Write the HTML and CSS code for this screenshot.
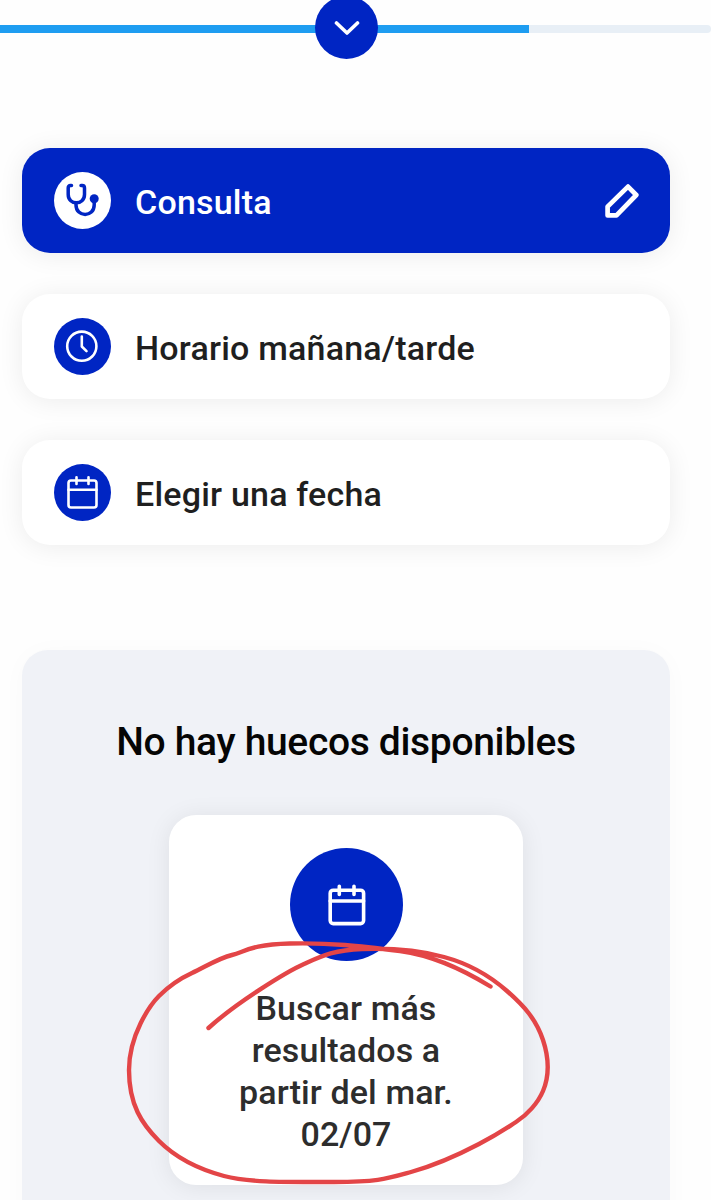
FILE: index.html
```
<!DOCTYPE html>
<html lang="es">
<head>
  <meta charset="UTF-8" />
  <title>Pedir cita</title>
  <meta name="viewport" content="width=device-width, initial-scale=1.0" />
  <link rel="stylesheet" href="styles.css">
</head>
<body>
  <header class="progress">
    <div class="progress-track"><div class="progress-bar"></div></div>
    <button class="toggle" aria-label="Desplegar">
      <svg width="26" height="16" viewBox="0 0 26 16">
        <path d="M2.500 3 L13 13 L23.500 3" />
      </svg>
    </button>
  </header>

  <main>
    <div class="steps">
      <div class="step active">
        <svg class="icon" viewBox="0 0 57 57">
          <circle class="disc" cx="28.5" cy="28.5" r="28.5" />
          <path d="M17.5 13.5 H16.5 Q14.2 13.5 14.2 16 V22.5 C14.2 33.5 30.5 33.5 30.5 22.5 V16 Q30.5 13.5 28.200 13.5 H27" />
          <path d="M22 31 V33 C22 45.5 40.2 45.5 40.2 33 V28" />
          <circle class="dot" cx="40.2" cy="26.7" r="4.5" />
        </svg>
        <span class="step-label">Consulta</span>
        <svg class="edit" width="34" height="34" viewBox="0 0 34 34">
          <path d="M2.6 31.4 V22.6 L23 2.6 L31.3 11 L11.5 31.4 Z" />
        </svg>
      </div>
      <div class="step">
        <svg class="icon" viewBox="0 0 57 57">
          <circle class="disc" cx="28.5" cy="28.5" r="28.5" />
          <circle cx="27.8" cy="28.2" r="14.6" />
          <path d="M27.8 18.5 V28.5 L32.5 33.2" />
        </svg>
        <span class="step-label">Horario mañana/tarde</span>
      </div>
      <div class="step">
        <svg class="icon" viewBox="0 0 57 57">
          <circle class="disc" cx="28.5" cy="28.5" r="28.5" />
          <rect x="14.5" y="16.5" width="28" height="27" rx="2.5" />
          <path d="M14.5 25.7 H42.5 M22.5 13.3 V20 M34.5 13.3 V20" />
        </svg>
        <span class="step-label">Elegir una fecha</span>
      </div>
    </div>

    <section class="results">
      <h2>No hay huecos disponibles</h2>
      <div class="search-card">
        <svg class="icon-big" viewBox="0 0 113 113">
          <circle class="disc" cx="56.5" cy="56.5" r="56.5" />
          <rect x="40.2" y="42.2" width="33.4" height="33.4" rx="3" />
          <path d="M40.2 53 H73.6 M49.3 38.3 V46.5 M64 38.3 V46.5" />
        </svg>
        <p>Buscar más<br>resultados a<br>partir del mar.<br>02/07</p>
        <!-- marca a mano sobre la tarjeta -->
        <svg class="scribble" width="440" height="260" viewBox="120 930 440 260">
          <path d="M490.5 986.5 C462 969 430 955 400 951 C360 946 330 942.500 290 943.500 S245 952 232 955 S205 967 192 973 S168 987 159 996 S129 1035 129 1070 S142 1124 159 1141 S198 1169 224 1176 S290 1182 334 1182 S386 1179 411 1172 S460 1154 479 1144 S505 1129 516 1122 S538 1103 543 1091 S550 1061 543 1040 S524 1006 507 991 S470 964 444 957 S390 948 362 949 S322 956 304 964 S236 1003 208.5 1028" />
        </svg>
      </div>
    </section>
  </main>
</body>
</html>
```

FILE: styles.css
```
* {
  box-sizing: border-box;
}
html {
  overflow: hidden;
}
body {
  margin: 0;
  height: 1200px;
  overflow: hidden;
  background: #fefefe;
  font-family: Roboto, "Liberation Sans", sans-serif;
  font-weight: 500;
  color: #1f1f1f;
}
svg {
  display: block;
  fill: none;
  stroke-linecap: round;
  stroke-linejoin: round;
}
.progress {
  position: relative;
  height: 148px;
  padding-top: 25px;
}
.progress-track {
  height: 8px;
  background: #e8eff6;
  border-radius: 0 4px 4px 0;
}
.progress-bar {
  width: 529px;
  height: 8px;
  background: #1e9df1;
}
.toggle {
  position: absolute;
  left: 315px;
  top: -4px;
  width: 63px;
  height: 63px;
  padding: 0;
  display: flex;
  align-items: center;
  justify-content: center;
  border: none;
  border-radius: 50%;
  background: #0025c3;
}
.toggle path {
  stroke: #fff;
  stroke-width: 3.6;
}
main {
  width: 648px;
  margin-left: 22px;
}
.steps {
  display: flex;
  flex-direction: column;
  gap: 41px;
}
.step {
  display: flex;
  align-items: center;
  height: 105px;
  padding: 0 31px 0 32px;
  border-radius: 28px;
  background: #fff;
  box-shadow: 0 2px 26px rgba(0, 0, 0, 0.075);
}
.step.active {
  background: #0025c3;
  color: #fff;
}
.icon {
  width: 57px;
  height: 57px;
  stroke: #fff;
  stroke-width: 2.6;
}
.disc {
  fill: #0025c3;
  stroke: none;
}
.active .icon {
  stroke: #0025c3;
  stroke-width: 3.5;
}
.active .disc {
  fill: #fff;
}
.active .icon .dot {
  fill: #0025c3;
  stroke: none;
}
.step-label {
  flex: 1;
  margin-left: 24px;
  padding-top: 2px;
  font-size: 34px;
  line-height: 42px;
  letter-spacing: 0.2px;
}
.edit path {
  stroke: #fff;
  stroke-width: 4.7;
}
.results {
  display: flex;
  flex-direction: column;
  align-items: center;
  height: 600px;
  margin-top: 105px;
  padding-top: 66px;
  border-radius: 26px;
  background: #f0f2f7;
  box-shadow: 0 2px 26px rgba(0, 0, 0, 0.025);
}
h2 {
  margin: 0;
  font-size: 39px;
  line-height: 52px;
  font-weight: 500;
  letter-spacing: -0.33px;
  color: #050505;
  white-space: nowrap;
}
.search-card {
  position: relative;
  display: flex;
  flex-direction: column;
  align-items: center;
  width: 354px;
  height: 370px;
  margin-top: 47px;
  padding-top: 33px;
  border-radius: 27px;
  background: #fff;
  box-shadow: 0 2px 24px rgba(0, 0, 0, 0.08);
}
.icon-big {
  width: 113px;
  height: 113px;
  stroke: #fff;
  stroke-width: 3.6;
}
.search-card p {
  margin: 26px 0 0;
  font-size: 34px;
  line-height: 42px;
  letter-spacing: 0.1px;
  text-align: center;
  white-space: nowrap;
  color: #2d2d2d;
}
.scribble {
  position: absolute;
  left: -49px;
  top: 115px;
}
.scribble path {
  stroke: #e34547;
  stroke-width: 4.4;
}
```
